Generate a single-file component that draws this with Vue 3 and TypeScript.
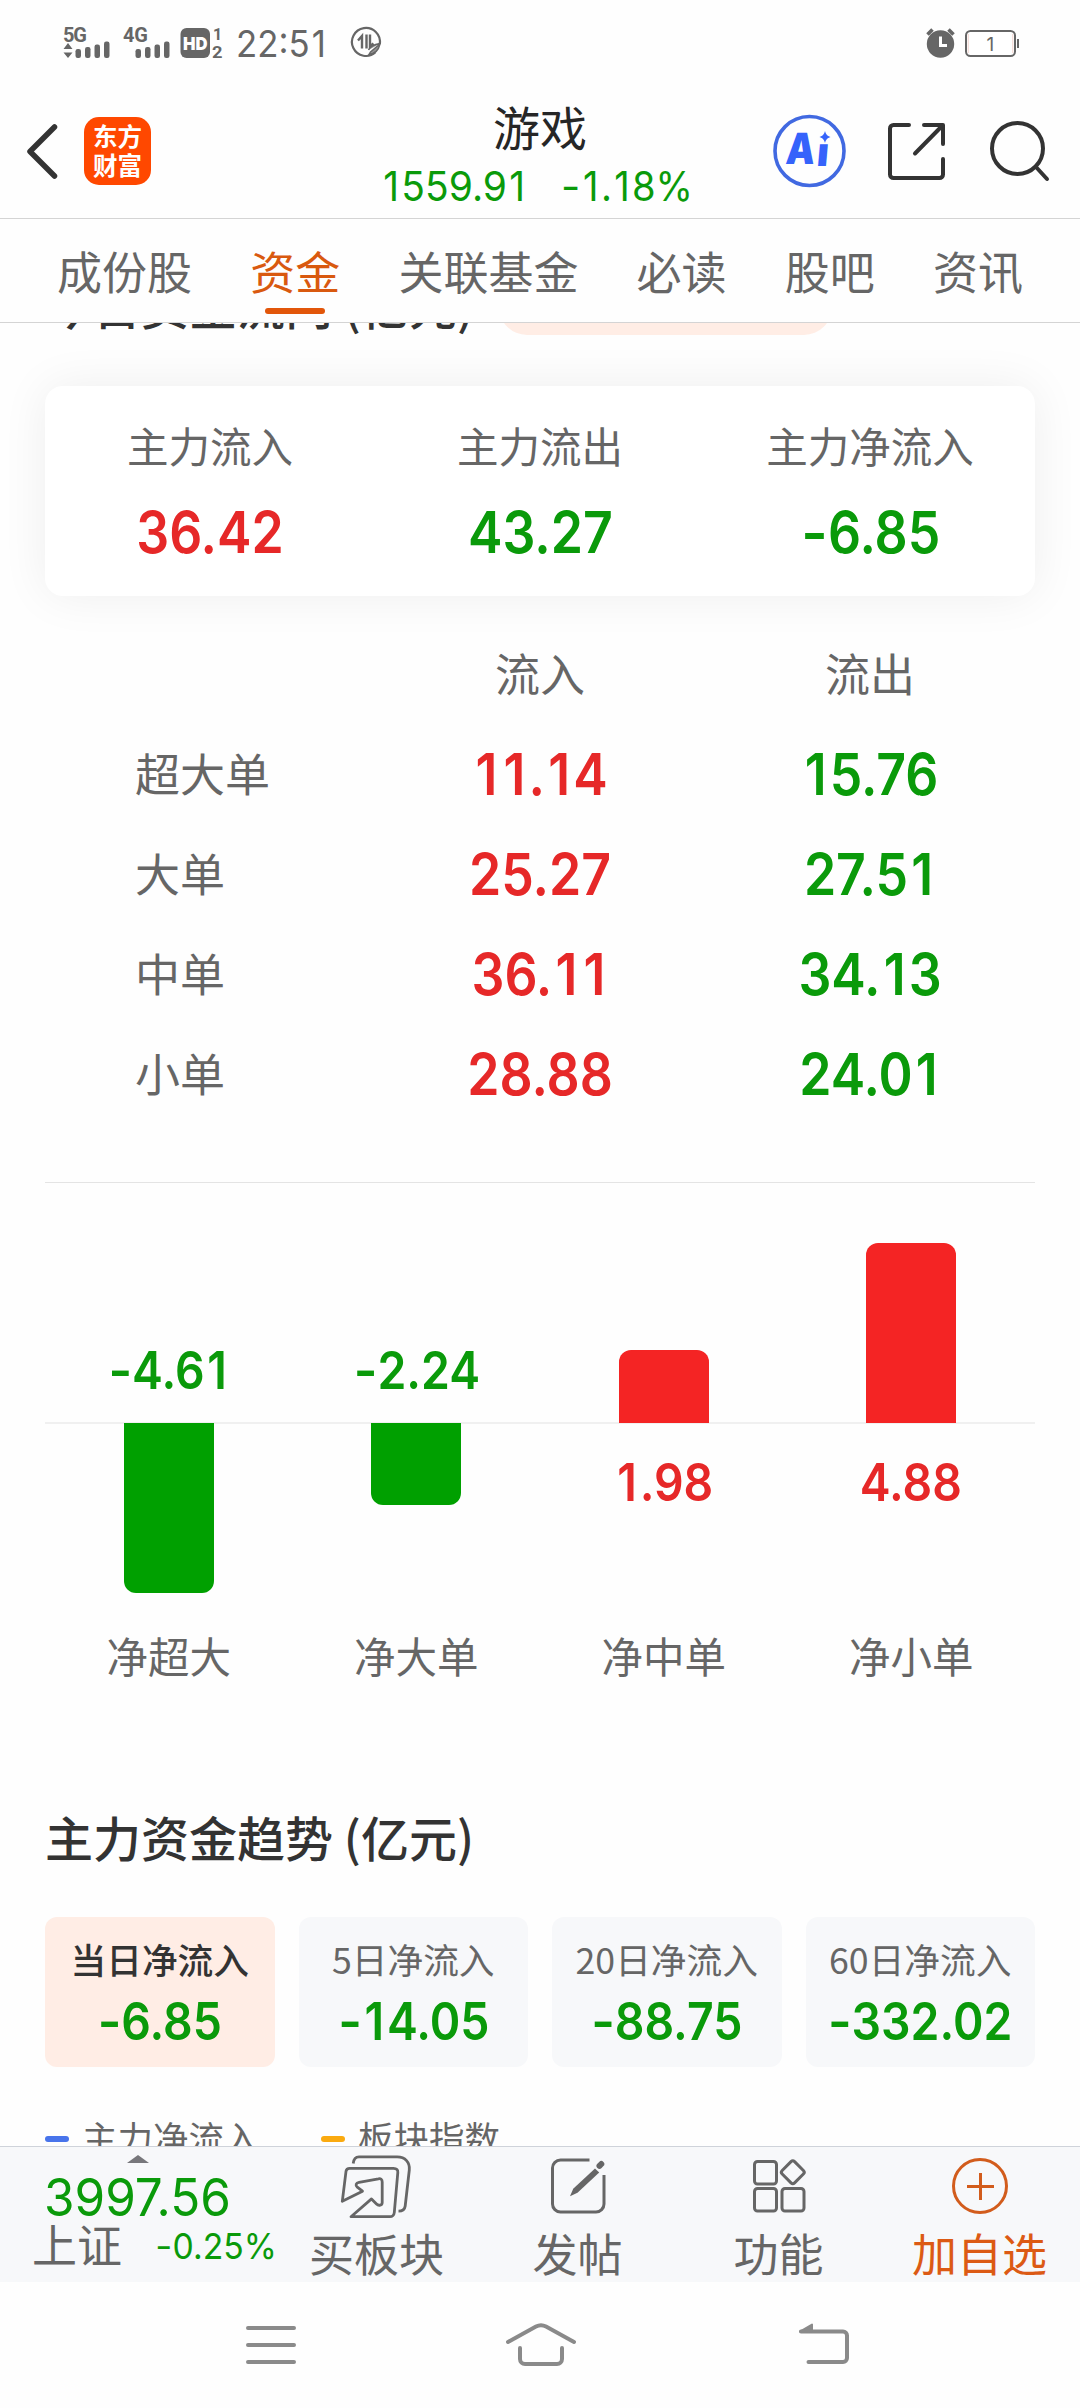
<script setup lang="ts">
import { h, type FunctionalComponent } from 'vue'

interface Cell { label: string; value: string; up: boolean }
interface Order { label: string; inflow: string; outflow: string }
interface Bar { label: string; value: string; up: boolean; height: number }
interface Trend { label: string; value: string; active?: boolean }

// Figures are set slightly condensed, with a wider "1" and minus sign.
const Num: FunctionalComponent<{ v: string }> = (props) =>
  h('span', { class: 'num' }, props.v.split(/([1-])/).filter(Boolean).map((part) =>
    part === '1' ? h('span', { class: 'one' }, part)
      : part === '-' ? h('span', { class: 'minus' }, part)
        : part,
  ))
Num.props = ['v']

const tabs: string[] = ['成份股', '资金', '关联基金', '必读', '股吧', '资讯']
const activeTab = '资金'

const summary: Cell[] = [
  { label: '主力流入', value: '36.42', up: true },
  { label: '主力流出', value: '43.27', up: false },
  { label: '主力净流入', value: '-6.85', up: false },
]

const orders: Order[] = [
  { label: '超大单', inflow: '11.14', outflow: '15.76' },
  { label: '大单', inflow: '25.27', outflow: '27.51' },
  { label: '中单', inflow: '36.11', outflow: '34.13' },
  { label: '小单', inflow: '28.88', outflow: '24.01' },
]

const bars: Bar[] = [
  { label: '净超大', value: '-4.61', up: false, height: 170 },
  { label: '净大单', value: '-2.24', up: false, height: 82 },
  { label: '净中单', value: '1.98', up: true, height: 73 },
  { label: '净小单', value: '4.88', up: true, height: 180 },
]

const trends: Trend[] = [
  { label: '当日净流入', value: '-6.85', active: true },
  { label: '5日净流入', value: '-14.05' },
  { label: '20日净流入', value: '-88.75' },
  { label: '60日净流入', value: '-332.02' },
]
</script>

<template>
  <div class="phone">
    <div class="status">
      <svg class="signals" width="162" height="34" viewBox="0 0 162 34">
        <g fill="#666">
          <text x="0" y="16.5" class="net" textLength="24">5G</text>
          <path d="M0.5 24h9L5 18zM0.5 27.5h9L5 33z" />
          <rect x="12.5" y="24" width="5.5" height="9" rx="2.2" />
          <rect x="22" y="22" width="5.5" height="11" rx="2.2" />
          <rect x="31.5" y="19.5" width="5.5" height="13.5" rx="2.2" />
          <rect x="41" y="16.5" width="5.5" height="16.5" rx="2.2" />
          <text x="60" y="16.5" class="net" textLength="25">4G</text>
          <rect x="72.5" y="24" width="5.5" height="9" rx="2.2" />
          <rect x="82" y="22" width="5.5" height="11" rx="2.2" />
          <rect x="91.5" y="19.5" width="5.5" height="13.5" rx="2.2" />
          <rect x="101" y="16.5" width="5.5" height="16.5" rx="2.2" />
          <rect x="117.5" y="3" width="29.5" height="30" rx="6" />
          <text x="150" y="14.5" class="sim">1</text>
          <text x="149" y="32.5" class="sim" textLength="10.5" lengthAdjust="spacingAndGlyphs">2</text>
        </g>
        <text x="120" y="24.5" class="hd" textLength="24.5" lengthAdjust="spacingAndGlyphs">HD</text>
      </svg>
      <span class="time"><Num v="22:51" /></span>
      <svg class="data" width="32" height="32" viewBox="0 0 32 32" fill="none" stroke="#666">
        <path d="M25.5 26.2A14 14 0 1 1 29.8 18" stroke-width="2.2" />
        <path d="M8 14.500l4-4.500V22.500M16.500 8.500V22.500M20 8.500V20.500l3.500-3" stroke-width="2.4" />
        <path d="M30 17.500c-6 1-10 3-11.500 6.500M19 28.500c5.500-.5 9.500-4 11-10.500l-9.500 8z" stroke-width="1.4" fill="#666" fill-opacity=".7" />
      </svg>
      <svg class="battery" width="94" height="32" viewBox="0 0 94 32">
        <circle cx="14.5" cy="18" r="13.7" fill="#666" />
        <path d="M1.500 8.500l5-5M27.500 8.500l-5-5" stroke="#666" stroke-width="3.6" />
        <path d="M14.500 10.500v9h6.500" fill="none" stroke="#fff" stroke-width="3" />
        <rect x="40" y="5" width="49" height="25" rx="4.5" fill="#fff" stroke="#666" stroke-width="2" />
        <path d="M42.300 8v19M86.700 8v19" stroke="#f6dcd8" stroke-width="1.2" />
        <path d="M92 13v9" stroke="#666" stroke-width="2" />
        <text x="60.5" y="24.5" class="level">1</text>
      </svg>
    </div>

    <header class="header">
      <svg class="back" width="34" height="58" viewBox="0 0 34 58" fill="none" stroke="#333" stroke-width="5.5" stroke-linecap="round" stroke-linejoin="round">
        <path d="M28.500 5L4 29.500l24.500 24.500" />
      </svg>
      <div class="logo"><span>东方</span><span>财富</span></div>
      <div class="heading">
        <h1>游戏</h1>
        <div class="quote"><Num v="1559.91" /><Num v="-1.18%" class="change" /></div>
      </div>
      <div class="tools">
        <svg width="74" height="74" viewBox="0.5 0 74 74">
          <circle cx="37" cy="37" r="34.5" fill="none" stroke="#4169e1" stroke-width="3.6" />
          <g fill="#3563fb" transform="skewX(-5)">
            <text x="17" y="50.5" class="ai" textLength="29" lengthAdjust="spacingAndGlyphs">A</text>
            <text x="48" y="52" class="ai ai-i">ı</text>
          </g>
          <path d="M52.500 17c1 3.500 2 4.700 5.500 6-3.500 1.300-4.500 2.500-5.500 6-1-3.500-2-4.700-5.500-6 3.500-1.300 4.500-2.500 5.500-6z" fill="#3563fb" />
        </svg>
        <svg width="62" height="62" viewBox="1.5 0 62 62" fill="none" stroke="#333" stroke-width="4" stroke-linecap="round" stroke-linejoin="round">
          <path d="M23.500 5H8a3.500 3.500 0 0 0-3.500 3.500v46A3.500 3.500 0 0 0 8 58h46a3.500 3.500 0 0 0 3.500-3.500V39M38.500 5h19v19M57 5.500L29.500 33.500" />
        </svg>
        <svg width="62" height="62" viewBox="0 0 62 62" fill="none" stroke="#333" stroke-width="4" stroke-linecap="round">
          <circle cx="28.5" cy="28.5" r="25.5" />
          <path d="M47 47l11 12" />
        </svg>
      </div>
    </header>

    <nav class="tabs">
      <span v-for="t in tabs" :key="t" class="tab" :class="{ on: t === activeTab }">{{ t }}</span>
    </nav>

    <main class="content">
      <div class="title-row">
        <h2>今日资金流向 (亿元)</h2>
        <span class="pill"></span>
      </div>

      <section class="card">
        <div v-for="c in summary" :key="c.label" class="cell">
          <span class="cell-label">{{ c.label }}</span>
          <Num :v="c.value" class="big" :class="c.up ? 'up' : 'down'" />
        </div>
      </section>

      <section class="table">
        <div class="row"><span></span><span>流入</span><span>流出</span></div>
        <div v-for="o in orders" :key="o.label" class="row">
          <span class="row-label">{{ o.label }}</span>
          <Num :v="o.inflow" class="big up" />
          <Num :v="o.outflow" class="big down" />
        </div>
      </section>

      <section class="chart">
        <div v-for="b in bars" :key="b.label" class="col">
          <div class="half top">
            <div v-if="b.up" class="bar bar-up" :style="{ height: b.height + 'px' }"></div>
            <Num v-else :v="b.value" class="mid down" />
          </div>
          <div class="half bottom">
            <div v-if="!b.up" class="bar bar-down" :style="{ height: b.height + 'px' }"></div>
            <Num v-else :v="b.value" class="mid up" />
          </div>
          <span class="col-label">{{ b.label }}</span>
        </div>
      </section>

      <h2 class="trend-title">主力资金趋势 (亿元)</h2>
      <section class="trends">
        <div v-for="t in trends" :key="t.label" class="trend" :class="{ active: t.active }">
          <span class="trend-label">{{ t.label }}</span>
          <Num :v="t.value" class="mid down" />
        </div>
      </section>

      <div class="legend">
        <span class="item"><i class="blue"></i>主力净流入</span>
        <span class="item"><i class="amber"></i>板块指数</span>
      </div>
    </main>

    <footer class="dock">
      <div class="index">
        <svg width="22" height="8" viewBox="0 0 22 8"><path d="M0 8L11 0l11 8z" fill="#77777b" /></svg>
        <Num v="3997.56" class="point" />
        <div class="index-row"><span>上证</span><Num v="-0.25%" class="pct" /></div>
      </div>
      <div class="action">
        <svg width="72" height="64" viewBox="0 0 72 64" fill="none" stroke="#666" stroke-width="2.8" stroke-linejoin="round">
          <path d="M12.200 8.500C12.700 4 14.500 1.900 18 1.900H56.200c8 0 12.900 5.600 12.100 13.100L64.200 51c-.5 3.800-2.500 5.200-6.700 5.200" />
          <path d="M1.300 46.300L5 16.300c.4-2.200 1.500-3 3.600-3H52.500c3.200 0 4.600 1.500 4.300 4.300L53.300 57.500c-.3 2.800-2 4.200-4.500 4.200H10L30.500 43.900 35.500 49c2.200 2.200 5.700 1.300 5.700-1.600V27c0-2.500-1.400-3.700-3.800-3.200L18 27.300c-3 .5-3.900 3-1.700 4.900l5.200 4z" />
        </svg>
        <span>买板块</span>
      </div>
      <div class="action">
        <svg width="60" height="64" viewBox="0 0 60 64" fill="none" stroke="#666" stroke-width="3">
          <path d="M41.500 5H12.500A8 8 0 0 0 4.500 13V49a8 8 0 0 0 8 8H48a8 8 0 0 0 8-8V20" />
          <path d="M47 13.500l4.200 4L29.500 37.800l-7.500 3.400 3.200-7.400z" fill="#666" stroke="none" />
          <path d="M51.500 10.800l1.800-1.800" stroke-width="6" stroke-linecap="round" />
        </svg>
        <span>发帖</span>
      </div>
      <div class="action">
        <svg width="60" height="64" viewBox="0 0 60 64" fill="none" stroke="#666" stroke-width="3">
          <rect x="5.5" y="6.5" width="22" height="22.5" rx="3" />
          <rect x="5.5" y="33.5" width="22" height="22.5" rx="3" />
          <rect x="33" y="33.5" width="22" height="22.5" rx="3" />
          <rect x="35" y="8.5" width="17.5" height="17.5" rx="2.5" transform="rotate(45 43.800 17.300)" />
        </svg>
        <span>功能</span>
      </div>
      <div class="action hot">
        <svg width="60" height="64" viewBox="0 0 60 64" fill="none" stroke="#d25c1c" stroke-width="3">
          <circle cx="30" cy="31" r="26.5" />
          <path d="M17 31.500h27M30.500 18v27" />
        </svg>
        <span>加自选</span>
      </div>
    </footer>

    <div class="system">
      <svg width="52" height="46" viewBox="0 0 52 46" stroke="#8a8a8a" stroke-width="4" stroke-linecap="round">
        <path d="M3 6h46M3 23h46M3 40h46" />
      </svg>
      <svg class="home" width="74" height="46" viewBox="0 0 74 46" fill="none" stroke="#8a8a8a" stroke-width="4" stroke-linecap="round">
        <path d="M4 20L32 4.500Q37 1.800 42 4.500L70 20M16 26V37a5 5 0 0 0 5 5H53a5 5 0 0 0 5-5V26" />
      </svg>
      <svg width="54" height="46" viewBox="0 0 54 46" fill="none" stroke="#8a8a8a" stroke-width="4" stroke-linecap="round">
        <path d="M4 9.500H46a4 4 0 0 1 4 4V36a4 4 0 0 1-4 4H11.500" />
        <path d="M3 9.500L15 2.500V9z" fill="#8a8a8a" stroke-width="2" stroke-linejoin="round" />
      </svg>
    </div>
  </div>
</template>

<style>
body { margin: 0; background: #fefefe; }
.num { display: inline-block; font-family: Inter, sans-serif; transform: scaleX(.95); white-space: nowrap; }
.num .one { margin: 0 .06em; }
.num .minus { display: inline-block; transform: scaleX(1.1); margin: 0 .03em; }
</style>

<style scoped>
.phone {
  width: 1080px;
  height: 2408px;
  display: flex;
  flex-direction: column;
  overflow: hidden;
  background: #fefefe;
  color: #666;
  font-family: Inter, "Noto Sans CJK SC", sans-serif;
}
.phone svg { display: block; flex: none; overflow: visible; }
h1, h2 { margin: 0; font-weight: 400; }
.up { color: #e62828; }
.down { color: #0a9a0a; }

.status { height: 84px; flex: none; display: flex; align-items: center; padding: 0 60px 0 63px; box-sizing: border-box; }
.net { font: 700 20px Roboto, sans-serif; }
.sim { font: 700 16px Roboto, sans-serif; }
.hd { font: 900 18px Inter, sans-serif; fill: #fff; }
.level { font: 400 19px Inter, sans-serif; fill: #666; }
.time { margin-left: 11px; width: 92px; font-size: 37px; line-height: 40px; margin-top: 4px; }
.time .num { transform-origin: left; transform: scaleX(.94); }
.data { margin-left: 22px; }
.battery { margin-left: auto; }

.header { height: 135px; flex: none; position: relative; display: flex; align-items: center; padding: 0 29px 0 26px; box-sizing: border-box; border-bottom: 1px solid #d4d4d4; }
.back { margin-right: 24px; }
.logo { width: 67px; height: 68px; border-radius: 15px; background: #ff4800; color: #fff; display: flex; flex-direction: column; align-items: center; justify-content: center; font: 700 24.5px/29px "Noto Sans CJK SC", sans-serif; padding-bottom: 3px; box-sizing: border-box; }
.heading { position: absolute; left: 0; right: 0; top: 20px; text-align: center; }
.heading h1 { font-size: 47px; line-height: 50px; color: #262626; }
.quote { display: flex; justify-content: center; gap: 29px; font-size: 41px; line-height: 40px; margin-top: 12px; color: #0a9a0a; }
.change { transform: scaleX(.93); transform-origin: left; }
.tools { margin-left: auto; display: flex; align-items: center; gap: 40px; }
.ai { font: 900 43px Inter, sans-serif; }
.ai-i { font-size: 40px; }

.tabs { height: 104px; flex: none; display: flex; justify-content: space-between; padding: 0 57px; box-sizing: border-box; border-bottom: 1px solid #d4d4d4; font-size: 45px; line-height: 109px; }
.tab { height: 103px; }
.tab.on { color: #d9590f; position: relative; }
.tab.on::after { content: ""; position: absolute; left: 50%; top: 89px; width: 60px; height: 6px; margin-left: -30px; border-radius: 3px; background: #e2560a; }

.content { height: 1823px; flex: none; overflow: hidden; padding: 0 45px; box-sizing: border-box; display: flex; flex-direction: column; }
h2 { font: 500 48px/56px "Noto Sans CJK SC", sans-serif; color: #333; white-space: nowrap; }
.title-row { height: 56px; flex: none; margin-top: -44px; display: flex; }
.title-row h2 { width: 454px; margin-top: -3px; }
.pill { width: 333px; height: 56px; border-radius: 28px; background: #ffede5; }

.card { height: 210px; flex: none; margin-top: 51px; border-radius: 18px; background: #fff; box-shadow: 0 0 48px rgba(0, 0, 0, .065); display: flex; }
.cell { flex: 1; display: flex; flex-direction: column; align-items: center; }
.cell-label { font-size: 41.5px; line-height: 50px; margin-top: 37px; }
.big { font-size: 57.5px; line-height: 60px; font-weight: 600; transform: scaleX(.9); }
.cell .big { margin-top: 29px; }

.table { margin-top: 30px; flex: none; }
.row { height: 100px; display: grid; grid-template-columns: 330px 330px 330px; align-items: center; text-align: center; font-size: 45px; line-height: 60px; }
.row .row-label { text-align: left; padding-left: 90px; }
.row > span { height: 60px; }
.row > .big { margin-top: -4px; }

.chart { margin-top: 56px; height: 531px; flex: none; border-top: 1px solid #e4e4e4; display: flex; }
.col { flex: 1; display: flex; flex-direction: column; align-items: center; }
.half { width: 100%; display: flex; flex-direction: column; align-items: center; }
.top { height: 241px; box-sizing: border-box; justify-content: flex-end; border-bottom: 2px solid #f0f0f0; }
.bottom { height: 204px; }
.bar { width: 90px; flex: none; position: relative; }
.bar-up { background: #f42424; border-radius: 12px 12px 0 0; top: 1px; }
.bar-down { background: #00a000; border-radius: 0 0 12px 12px; top: -1px; }
.mid { font-size: 51.5px; line-height: 56px; font-weight: 600; transform: scaleX(.9); }
.top .mid { margin-bottom: 24px; }
.bottom .mid { margin-top: 30px; }
.col-label { font-size: 41.5px; line-height: 60px; }

.trend-title { margin-top: 94px; }
.trends { margin-top: 53px; display: grid; grid-template-columns: repeat(4, 1fr); gap: 24px; flex: none; }
.trend { height: 150px; border-radius: 12px; background: #f7f8fa; display: flex; flex-direction: column; align-items: center; }
.trend.active { background: #ffede5; }
.trend-label { font: 400 35.7px/44px "Noto Sans CJK SC", sans-serif; margin-top: 20px; }
.active .trend-label { font-weight: 500; color: #333; }
.trend .mid { margin-top: 12px; }
.legend { display: flex; margin-top: 48px; font-size: 35.5px; line-height: 50px; }
.item { width: 276px; display: flex; align-items: center; }
.item i { width: 24px; height: 6px; border-radius: 3px; margin: -3px 13px 0 0; }
.blue { background: #4874eb; }
.amber { background: #faaa10; }

.dock { height: 136px; flex: none; box-sizing: border-box; border-top: 1px solid #cfd3da; background: #f7f8fa; display: flex; }
.index { width: 276px; display: flex; flex-direction: column; align-items: flex-start; }
.index svg { margin: 8px 0 0 127px; }
.point { font-size: 52px; line-height: 56px; margin: 7px 0 0 44px; transform-origin: left; color: #0a9a0a; }
.index-row { display: flex; align-items: center; padding-left: 32px; font-size: 45px; line-height: 50px; margin-top: -4px; white-space: nowrap; }
.pct { font-size: 35.5px; margin-left: 33px; transform-origin: left; color: #0a9a0a; }
.action { width: 201px; display: flex; flex-direction: column; align-items: center; font-size: 45px; line-height: 50px; }
.action svg { margin-top: 8px; margin-bottom: 12px; }
.hot { color: #dc5a14; }

.system { flex: 1; display: flex; align-items: flex-start; padding: 40px 0 0 245px; }
.home { margin: 0 219px 0 207px; }
</style>
